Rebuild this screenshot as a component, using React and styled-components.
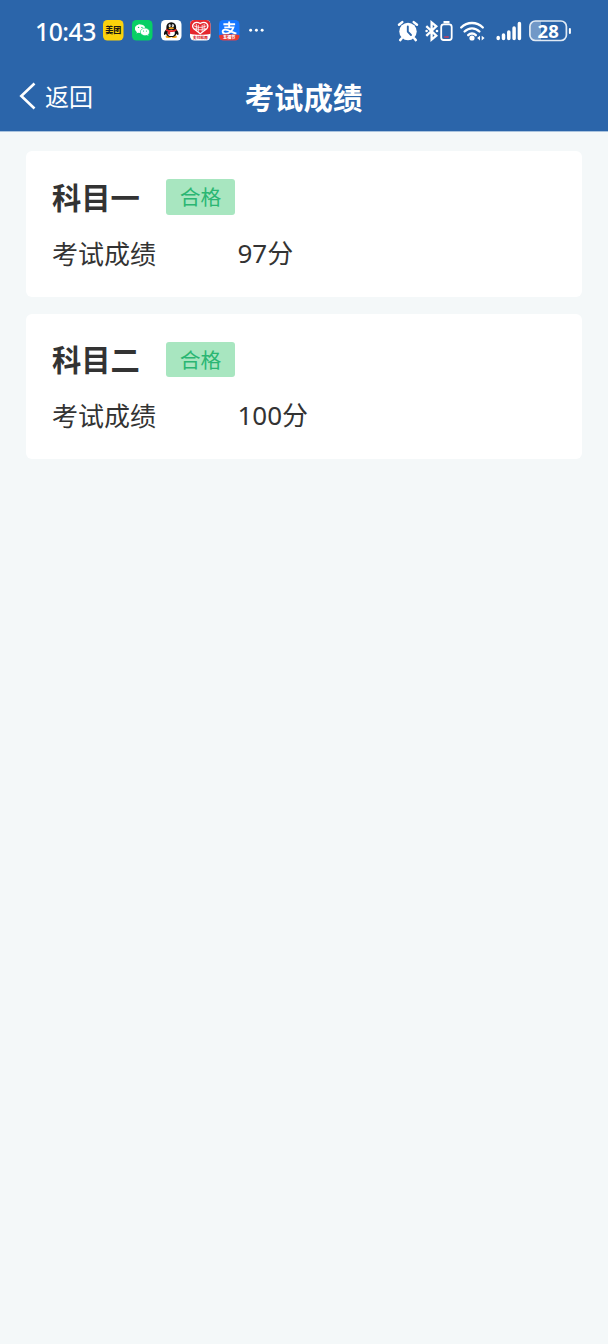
import React from "react";
import styled, { createGlobalStyle } from "styled-components";

const cjk = '"Noto Sans CJK SC", sans-serif';
const latin = '"Noto Sans", "Noto Sans CJK SC", sans-serif';

const GlobalStyle = createGlobalStyle`
  * { box-sizing: border-box; }
  body { margin: 0; background: #f4f8f9; font-family: ${cjk}; }
`;

const Screen = styled.div`
  min-height: 1344px;
  background: #f4f8f9;
  color: #333;
`;

const Header = styled.header`
  height: 131px;
  background: #2b65aa;
  border-bottom: 0;
  color: #fff;
  box-shadow: 0 1px 0 #a9c3de;
`;

const StatusBar = styled.div`
  height: 61px;
  padding: 0 36px 0 35px;
  display: flex;
  align-items: center;
  justify-content: space-between;
`;

const StatusGroup = styled.div`
  display: flex;
  align-items: center;
`;

const Clock = styled.span`
  width: 68px;
  font: 500 24.8px/30px ${latin};
  letter-spacing: -0.5px;
`;

const AppIcon = styled.svg`
  width: 20.5px;
  height: 20.5px;
  margin-right: 8.5px;
  flex: none;
`;

const StatusIcon = styled.svg`
  width: ${(p) => p.$w}px;
  height: 24px;
  margin-left: ${(p) => p.$gap || 0}px;
  flex: none;
`;

const NavBar = styled.div`
  height: 69px;
  padding: 0 20px 0 19px;
  display: grid;
  grid-template-columns: 1fr auto 1fr;
  align-items: center;
`;

const BackButton = styled.button`
  display: flex;
  align-items: center;
  gap: 9px;
  padding: 0;
  border: 0;
  background: none;
  color: #fff;
  font: 400 24px/36px ${cjk};
`;

const PageTitle = styled.h1`
  margin: 0;
  font: 700 29.4px/42px ${cjk};
`;

const CardList = styled.main`
  padding: 20px 26px;
  display: flex;
  flex-direction: column;
  gap: 17px;
`;

const Card = styled.section`
  height: 145.7px;
  padding: 28px 26px 0;
  border-radius: 6px;
  background: #fff;
`;

const CardHead = styled.div`
  height: 35.5px;
  display: flex;
  align-items: center;
  gap: 26.5px;
`;

const Subject = styled.h2`
  margin: 0;
  font: 700 29.3px/34px ${cjk};
  height: 36px;
`;

const Tag = styled.span`
  width: 68.4px;
  height: 35.5px;
  border-radius: 3px;
  background: #a8e6c0;
  color: #2bb673;
  font: 400 20.8px/35px ${cjk};
  text-align: center;
`;

const ScoreRow = styled.div`
  margin-top: 19px;
  display: flex;
  font: 400 26px/38px ${cjk};
`;

const ScoreLabel = styled.span`
  width: 185.5px;
`;

const ScoreValue = styled.span`
  font-family: ${latin};
`;

const TinyText = styled.text`
  font-family: ${cjk};
  font-weight: 900;
  text-anchor: middle;
`;

const MeituanIcon = () => (
  <AppIcon viewBox="0 0 21 21">
    <rect width="21" height="21" rx="4.5" fill="#fbd20b" />
    <TinyText x="10.5" y="13.6" fontSize="8.2" fill="#1c1a10">美团</TinyText>
  </AppIcon>
);

const WeChatIcon = () => (
  <AppIcon viewBox="0 0 21 21">
    <rect width="21" height="21" rx="4.5" fill="#07cf65" />
    <path d="M8.4 4.5c-3 0-5.3 1.9-5.3 4.3 0 1.4.8 2.6 2 3.4l-.5 1.6 1.9-1c.6.2 1.2.3 1.9.3z" fill="#fff" />
    <ellipse cx="8.4" cy="8.8" rx="5.2" ry="4.3" fill="#fff" />
    <ellipse cx="13.3" cy="12.2" rx="4.7" ry="3.9" fill="#fff" stroke="#07cf65" strokeWidth=".6" />
    <path d="M15 15l1.8 1.5-.4-2.2z" fill="#fff" />
    <g fill="#07cf65">
      <circle cx="6.7" cy="7.6" r=".7" />
      <circle cx="10.2" cy="7.6" r=".7" />
      <circle cx="11.8" cy="11.3" r=".6" />
      <circle cx="14.8" cy="11.3" r=".6" />
    </g>
  </AppIcon>
);

const PenguinIcon = () => (
  <AppIcon viewBox="0 0 21 21">
    <rect width="21" height="21" rx="4.5" fill="#fff" />
    <ellipse cx="7.5" cy="17.2" rx="2.9" ry="1.3" fill="#f6a51b" />
    <ellipse cx="13.5" cy="17.2" rx="2.9" ry="1.3" fill="#f6a51b" />
    <path d="M10.5 2.2c-3.3 0-5 2.200-5 5v2c-1.600 1.900-2.900 4-2.400 5.700.4.900 1.400 0 2-.9.600 2.300 2.600 3.500 5.400 3.500s4.800-1.200 5.400-3.500c.6.900 1.600 1.800 2 .9.500-1.700-.8-3.800-2.400-5.700v-2c0-2.800-1.700-5-5-5z" fill="#111" />
    <ellipse cx="10.5" cy="13.3" rx="3.7" ry="3.2" fill="#fff" />
    <ellipse cx="8.9" cy="5.8" rx="1.1" ry="1.5" fill="#fff" />
    <ellipse cx="12.1" cy="5.8" rx="1.1" ry="1.5" fill="#fff" />
    <circle cx="9.2" cy="6" r=".45" fill="#111" />
    <circle cx="11.8" cy="6" r=".45" fill="#111" />
    <ellipse cx="10.5" cy="8.4" rx="2.8" ry=".9" fill="#f6a51b" />
    <path d="M5.4 9.200c3 1.700 7.200 1.700 10.200 0l.4 1.800c-2 1.100-4.500 1.400-6.600 1.200v2.600H7v-3l-2-.9z" fill="#e9272f" />
  </AppIcon>
);

const HeartIcon = () => (
  <AppIcon viewBox="0 0 21 21">
    <rect width="21" height="21" rx="4.5" fill="#fff" />
    <path d="M4.5 0h12A4.5 4.5 0 0 1 21 4.5v9.500c-5 1.500-16 1.500-21 0V4.500A4.500 4.500 0 0 1 4.500 0z" fill="#e5272d" />
    <path d="M10.5 14L3.9 9C.7 5.300 5 .2 10.500 3.600 16 .2 20.300 5.300 17.100 9z" fill="none" stroke="#fff" strokeWidth="1.3" />
    <path d="M4 6l4.500 1.500M4.500 9l4 .5M17 6l-4.500 1.500M16.500 9l-4 .5M6.500 4v7M14.500 4v7M8.500 5v7M12.500 5v7M8.500 7.500h4M8.500 10h4" stroke="#fff" strokeWidth=".8" />
    <TinyText x="10.5" y="19.2" fontSize="3.9" fill="#d8262c">支付就用</TinyText>
  </AppIcon>
);

const AlipayIcon = () => (
  <AppIcon viewBox="0 0 21 21">
    <rect width="21" height="21" rx="4.5" fill="#1677ff" />
    <path d="M4.5 4.4h12M10.400 1.600v5.600M5.400 7.500h9.400c-1 3.600-4.300 6.500-7.900 6.500-4.100 0-4.100-4.100-.6-4.100 3.700 0 7.200 2.700 11.500 4.100" fill="none" stroke="#fff" strokeWidth="1.9" />
    <path d="M0 15.700c5-1.300 16-1.300 21 0v.8A4.500 4.500 0 0 1 16.500 21h-12A4.500 4.500 0 0 1 0 16.500z" fill="#e83a31" />
    <TinyText x="10.5" y="19.6" fontSize="4.2" fill="#fff">五福节</TinyText>
  </AppIcon>
);

const MoreDots = () => (
  <AppIcon viewBox="0 0 21 21" fill="#fff">
    <circle cx="2.7" cy="10.5" r="1.5" />
    <circle cx="8.6" cy="10.5" r="1.5" />
    <circle cx="14.5" cy="10.5" r="1.5" />
  </AppIcon>
);

const AlarmIcon = () => (
  <StatusIcon $w={22} viewBox="0 0 22 24" stroke="#fff" strokeLinecap="round">
    <circle cx="11" cy="12.5" r="8.7" fill="#fff" stroke="none" />
    <path d="M2 5.800l3.300-2.700M20 5.800l-3.300-2.700M4.800 19.200l-1.600 1.900M17.200 19.200l1.600 1.900" strokeWidth="2.5" />
    <path d="M10.800 7.500v5.200l3.200 3.300" fill="none" stroke="#2b65aa" strokeWidth="1.9" />
  </StatusIcon>
);

const BluetoothIcon = () => (
  <StatusIcon $w={28} $gap={6} viewBox="0 0 28 24" fill="none" stroke="#fff">
    <path d="M1.300 7.200l10 9.400-4.700 4V3.400l4.700 4-10 9.400" strokeWidth="2.3" />
    <circle cx="1.6" cy="12" r="1.3" fill="#fff" stroke="none" />
    <circle cx="12" cy="12" r="1.3" fill="#fff" stroke="none" />
    <path d="M18.500 3.200h6" strokeWidth="2.4" />
    <rect x="16.2" y="5.4" width="10.5" height="15.6" rx="2.5" strokeWidth="1.8" />
    <path d="M19.200 18h4.600" stroke="#d43a55" strokeWidth="1.4" />
  </StatusIcon>
);

const WifiIcon = () => (
  <StatusIcon $w={27} $gap={6} viewBox="0 0 27 24" fill="none" stroke="#fff" strokeLinecap="round">
    <path d="M2.200 8.500c6-6.100 15.600-6.100 21.600 0M5.600 12.500c4.200-4.200 10.600-4.200 14.800 0M9.200 16.200c2.200-2.200 5.400-2.200 7.600 0" strokeWidth="2.4" />
    <circle cx="13" cy="19" r="2.6" fill="#fff" stroke="none" />
    <path d="M21 16.700v4.800l-2.900-2.400zM22.700 16.700v4.800l2.900-2.400z" fill="#fff" stroke="none" />
  </StatusIcon>
);

const SignalIcon = () => (
  <StatusIcon $w={26} $gap={10} viewBox="0 0 26 24" stroke="#fff" strokeWidth="3.5" strokeLinecap="round">
    <path d="M2.200 18.400v1M7.500 16v3.400M12.800 12.900v6.500M18.100 8.900v10.500M23.400 4.400v15" />
  </StatusIcon>
);

const BatteryIcon = () => (
  <StatusIcon $w={43} $gap={7} viewBox="0 0 43 24">
    <path d="M6 2h6v20H6a5 5 0 0 1-5-5V7a5 5 0 0 1 5-5z" fill="#7198c7" />
    <rect x=".9" y="2" width="36.5" height="19.5" rx="5.5" fill="none" stroke="#e1eaf4" strokeWidth="1.7" />
    <path d="M40.900 10v4" stroke="#fff" strokeWidth="2" strokeLinecap="round" />
    <text x="19.2" y="18.900" textAnchor="middle" fill="#fff" fontFamily="Noto Sans, sans-serif" fontWeight="700" fontSize="18.5">28</text>
  </StatusIcon>
);

const BackArrow = () => (
  <svg width="17" height="28" viewBox="0 0 17 28" fill="none" stroke="#fff" strokeWidth="2.6">
    <path d="M15.500 1.500L2.300 14l13.200 12.500" />
  </svg>
);

const results = [
  { subject: "科目一", score: "97分" },
  { subject: "科目二", score: "100分" },
];

export default function App() {
  return (
    <Screen>
      <GlobalStyle />
      <Header>
        <StatusBar>
          <StatusGroup>
            <Clock>10:43</Clock>
            <MeituanIcon />
            <WeChatIcon />
            <PenguinIcon />
            <HeartIcon />
            <AlipayIcon />
            <MoreDots />
          </StatusGroup>
          <StatusGroup>
            <AlarmIcon />
            <BluetoothIcon />
            <WifiIcon />
            <SignalIcon />
            <BatteryIcon />
          </StatusGroup>
        </StatusBar>
        <NavBar>
          <BackButton><BackArrow />返回</BackButton>
          <PageTitle>考试成绩</PageTitle>
        </NavBar>
      </Header>
      <CardList>
        {results.map((r) => (
          <Card key={r.subject}>
            <CardHead>
              <Subject>{r.subject}</Subject>
              <Tag>合格</Tag>
            </CardHead>
            <ScoreRow>
              <ScoreLabel>考试成绩</ScoreLabel>
              <ScoreValue>{r.score}</ScoreValue>
            </ScoreRow>
          </Card>
        ))}
      </CardList>
    </Screen>
  );
}
